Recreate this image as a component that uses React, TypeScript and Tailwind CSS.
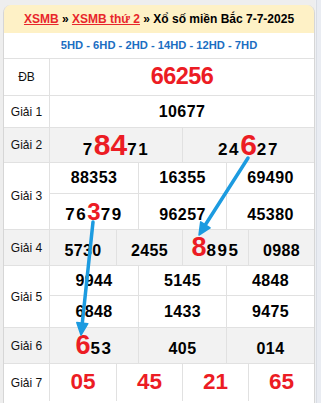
import React from "react";

const LINE = "border-[#e1e1e1]";

function Row({
  label,
  gray,
  children,
  last,
}: {
  label: string;
  gray?: boolean;
  children: React.ReactNode;
  last?: boolean;
}) {
  return (
    <div
      className={`flex ${last ? "" : "border-b"} ${LINE} ${gray ? "bg-[#f2f2f2]" : "bg-white"}`}
    >
      <div
        className={`w-[46px] shrink-0 border-r ${LINE} flex items-center justify-center text-[12px] text-[#111]`}
      >
        {label}
      </div>
      <div className="flex-1 flex flex-col">{children}</div>
    </div>
  );
}

function Sub({
  cols,
  h,
  bottom,
  children,
}: {
  cols: 1 | 2 | 3 | 4;
  h: string;
  bottom?: boolean;
  children: React.ReactNode;
}) {
  const c =
    cols === 1
      ? "grid-cols-1"
      : cols === 2
        ? "grid-cols-2"
        : cols === 3
          ? "grid-cols-3"
          : "grid-cols-4";
  return (
    <div className={`grid ${c} ${h} ${bottom ? "border-b" : ""} ${LINE}`}>
      {children}
    </div>
  );
}

function Cell({
  children,
  strut,
}: {
  children: React.ReactNode;
  strut?: "s24" | "s27" | "s30";
}) {
  const s =
    strut === "s24"
      ? "text-[24px]"
      : strut === "s27"
        ? "text-[27px]"
        : strut === "s30"
          ? "text-[30px]"
          : "text-[16px]";
  return (
    <div
      className={`flex items-center justify-center border-l ${LINE} first:border-l-0`}
    >
      <span className={`whitespace-nowrap font-bold text-black leading-none ${s}`}>
        {children}
      </span>
    </div>
  );
}

const N = ({ v }: { v: string }) => (
  <span className="text-[16px] tracking-[0.4px]">{v}</span>
);
const H = ({ v }: { v: string }) => (
  <span className="text-[17px] tracking-[1.6px]">{v}</span>
);
const R = ({ v, size }: { v: string; size: string }) => (
  <span className={`${size} text-[#ec1c24]`}>{v}</span>
);

export default function App() {
  return (
    <div className="relative w-[321px] h-[403px] overflow-hidden bg-[#eeeeee] font-['Liberation_Sans',Arial,sans-serif]">
      <div className="flex h-full">
        <div className="w-[3px] shrink-0" />
        <div className="w-[312px] shrink-0 pt-[5px]">
          <div className="border-x border-[#d6d6d6] rounded-t-[8px] overflow-hidden">
            <div className="h-[28px] bg-[#fef1c6] flex items-center justify-center text-[12px] font-bold text-black whitespace-nowrap">
              <span className="text-[#e8262b] underline">XSMB</span>
              <span>&nbsp;»&nbsp;</span>
              <span className="text-[#e8262b] underline">XSMB thứ 2</span>
              <span>&nbsp;» Xổ số miền Bắc 7-7-2025</span>
            </div>
            <div className={`h-[26px] bg-white border-b ${LINE} flex items-center justify-center text-[11.2px] font-bold text-[#1b6ec2]`}>
              5HD - 6HD - 2HD - 14HD - 12HD - 7HD
            </div>

            <Row label="ĐB">
              <Sub cols={1} h="h-[36px]">
                <Cell>
                  <span className="text-[23.5px] tracking-[-0.6px] text-[#ec1c24]">66256</span>
                </Cell>
              </Sub>
            </Row>

            <Row label="Giải 1">
              <Sub cols={1} h="h-[31px]">
                <Cell>
                  <N v="10677" />
                </Cell>
              </Sub>
            </Row>

            <Row label="Giải 2" gray>
              <Sub cols={2} h="h-[34px]">
                <Cell strut="s30">
                  <H v="7" />
                  <R v="84" size="text-[30px]" />
                  <H v="71" />
                </Cell>
                <Cell strut="s30">
                  <H v="24" />
                  <R v="6" size="text-[30px]" />
                  <H v="27" />
                </Cell>
              </Sub>
            </Row>

            <Row label="Giải 3">
              <Sub cols={3} h="h-[31px]" bottom>
                <Cell><N v="88353" /></Cell>
                <Cell><N v="16355" /></Cell>
                <Cell><N v="69490" /></Cell>
              </Sub>
              <Sub cols={3} h="h-[35px]">
                <Cell strut="s24">
                  <H v="76" />
                  <R v="3" size="text-[24px]" />
                  <H v="79" />
                </Cell>
                <Cell strut="s24"><N v="96257" /></Cell>
                <Cell strut="s24"><N v="45380" /></Cell>
              </Sub>
            </Row>

            <Row label="Giải 4" gray>
              <Sub cols={4} h="h-[35px]">
                <Cell strut="s27"><N v="5730" /></Cell>
                <Cell strut="s27"><N v="2455" /></Cell>
                <Cell strut="s27">
                  <R v="8" size="text-[27px]" />
                  <H v="895" />
                </Cell>
                <Cell strut="s27"><N v="0988" /></Cell>
              </Sub>
            </Row>

            <Row label="Giải 5">
              <Sub cols={3} h="h-[30px]" bottom>
                <Cell><N v="9944" /></Cell>
                <Cell><N v="5145" /></Cell>
                <Cell><N v="4848" /></Cell>
              </Sub>
              <Sub cols={3} h="h-[31px]">
                <Cell><N v="6848" /></Cell>
                <Cell><N v="1433" /></Cell>
                <Cell><N v="9475" /></Cell>
              </Sub>
            </Row>

            <Row label="Giải 6" gray>
              <Sub cols={3} h="h-[35px]">
                <Cell strut="s27">
                  <R v="6" size="text-[27px]" />
                  <H v="53" />
                </Cell>
                <Cell strut="s27"><N v="405" /></Cell>
                <Cell strut="s27"><N v="014" /></Cell>
              </Sub>
            </Row>

            <Row label="Giải 7" last>
              <Sub cols={4} h="h-[37px]">
                <Cell><span className="text-[22.5px] text-[#ec1c24]">05</span></Cell>
                <Cell><span className="text-[22.5px] text-[#ec1c24]">45</span></Cell>
                <Cell><span className="text-[22.5px] text-[#ec1c24]">21</span></Cell>
                <Cell><span className="text-[22.5px] text-[#ec1c24]">65</span></Cell>
              </Sub>
            </Row>
            <div className="h-[20px] bg-white" />
          </div>
        </div>
        <div className="w-[1px] shrink-0 bg-[#eef0f3]" />
        <div className="w-[1px] shrink-0 bg-[#d9dde4]" />
        <div className="flex-1 bg-[#e9ecf2]" />
      </div>

      <svg
        className="absolute inset-0 pointer-events-none"
        width="321"
        height="403"
        viewBox="0 0 321 403"
      >
        <g stroke="#1c9be0" strokeWidth="3.5" strokeLinecap="round" fill="#1c9be0">
          <line x1="248" y1="158" x2="205.4" y2="224.8" />
          <polygon points="199,235 210.1,227.8 200.7,221.9" strokeWidth="1.5" strokeLinejoin="round" />
          <line x1="93" y1="222" x2="82.3" y2="323.1" />
          <polygon points="81,335 87.8,323.7 76.8,322.5" strokeWidth="1.5" strokeLinejoin="round" />
        </g>
      </svg>
    </div>
  );
}
